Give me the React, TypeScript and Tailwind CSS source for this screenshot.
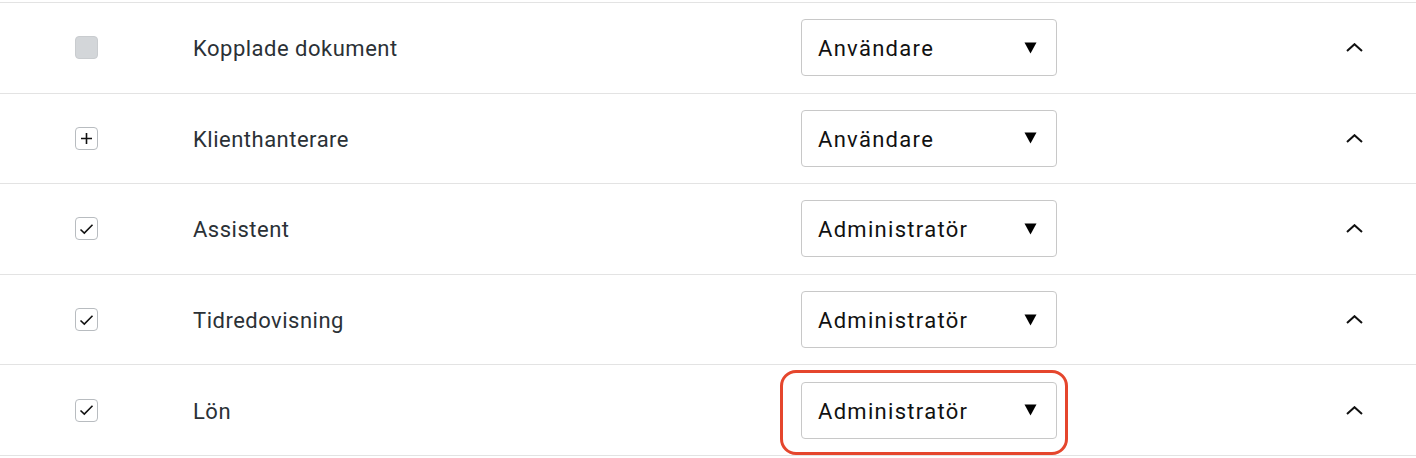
import React from "react";

type Row = { label: string; role: string; box: "disabled" | "plus" | "check"; highlight?: boolean };

const rows: Row[] = [
  { label: "Kopplade dokument", role: "Användare", box: "disabled" },
  { label: "Klienthanterare", role: "Användare", box: "plus" },
  { label: "Assistent", role: "Administratör", box: "check" },
  { label: "Tidredovisning", role: "Administratör", box: "check" },
  { label: "Lön", role: "Administratör", box: "check", highlight: true },
];

function Box({ kind }: { kind: Row["box"] }) {
  if (kind === "disabled") {
    return <div className="w-[23px] h-[23px] rounded-[4px] bg-[#d3d6d9] border border-[#c9cccf]" />;
  }
  return (
    <div className="w-[23px] h-[23px] rounded-[4px] bg-white border border-[#b8bcc0] flex items-center justify-center">
      {kind === "plus" ? (
        <svg width="13" height="13" viewBox="0 0 13 13">
          <path d="M6.5 1v11M1 6.5h11" stroke="#111" strokeWidth="1.6" />
        </svg>
      ) : (
        <svg width="15" height="12" viewBox="0 0 15 12">
          <path d="M1.5 6.5l3.8 3.6L13.5 1.8" stroke="#111" strokeWidth="1.6" fill="none" />
        </svg>
      )}
    </div>
  );
}

export default function App() {
  return (
    <div className="w-[1416px] h-[458px] bg-white pt-[2px]" style={{ fontFamily: "Roboto, 'Liberation Sans', sans-serif" }}>
      <div className="border-t border-[#e3e3e3]">
        {rows.map((r) => (
          <div key={r.label} className="h-[90.6px] border-b border-[#e3e3e3] flex items-center">
            <div className="w-[75px]" />
            <Box kind={r.box} />
            <div className="w-[95px]" />
            <div className="w-[608px] text-[22px] text-[#2b3136] tracking-[0.5px] pt-[2px]">{r.label}</div>
            <div className="relative">
              <div className="w-[256px] h-[57px] rounded-[4px] border border-[#c8c8c8] bg-white flex items-center justify-between pl-[16px] pr-[19px]">
                <span className="text-[22px] text-[#111] tracking-[1.3px] pt-[2px]">{r.role}</span>
                <svg width="13" height="12" viewBox="0 0 13 12">
                  <path d="M0.5 0.5h12L6.5 11.5z" fill="#000" />
                </svg>
              </div>
              {r.highlight && (
                <div className="absolute left-[-21px] top-[-12px] w-[288px] h-[85px] rounded-[16px] border-[3px] border-[#e5462d]" />
              )}
            </div>
            <div className="w-[289px]" />
            <svg width="17" height="9" viewBox="0 0 17 9">
              <path d="M1 8L8.5 1.2L16 8" stroke="#111" strokeWidth="2" fill="none" />
            </svg>
          </div>
        ))}
      </div>
    </div>
  );
}
